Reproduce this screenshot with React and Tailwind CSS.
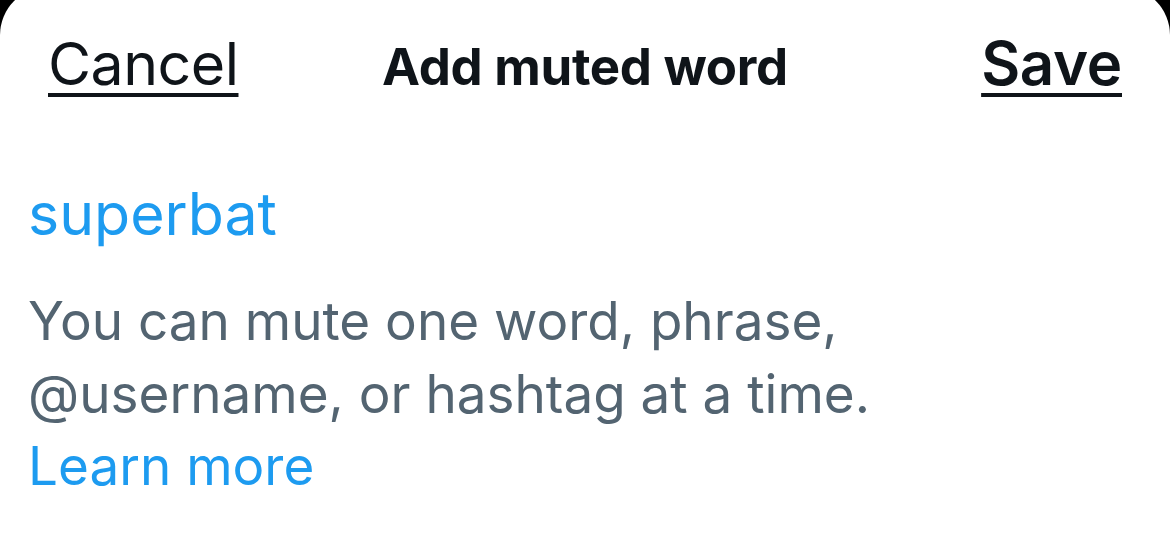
import React from 'react'

export default function App() {
  return (
    <div className="w-[1170px] h-[554px] bg-black overflow-hidden">
      <div className="-mt-[13px] h-[567px] bg-white rounded-t-[48px] font-['Inter','Noto_Sans',sans-serif] antialiased">
        <div className="grid grid-cols-[1fr_auto_1fr] items-baseline px-[48px] pt-[41px] text-[#0f1419]">
          <a href="#" className="justify-self-start text-[59px] leading-[70px] tracking-[-0.5px] underline decoration-[4px] underline-offset-[8px]">
            Cancel
          </a>
          <h1 className="text-[51px] leading-[70px] font-bold tracking-[-0.3px]">Add muted word</h1>
          <a href="#" className="justify-self-end text-[60px] leading-[70px] font-semibold tracking-[-0.3px] underline decoration-[4px] underline-offset-[8px]">
            Save
          </a>
        </div>

        <div className="px-[28px]">
          <div className="mt-[76px] text-[59px] leading-[72px] text-[#1d9bf0]">superbat</div>
          <p className="mt-[35px] text-[53px] leading-[72.5px] text-[#536471]">
            You can mute one word, phrase,
            <br />
            @username, or hashtag at a time.
            <br />
            <a href="#" className="text-[#1d9bf0]">Learn more</a>
          </p>
        </div>
      </div>
    </div>
  )
}
